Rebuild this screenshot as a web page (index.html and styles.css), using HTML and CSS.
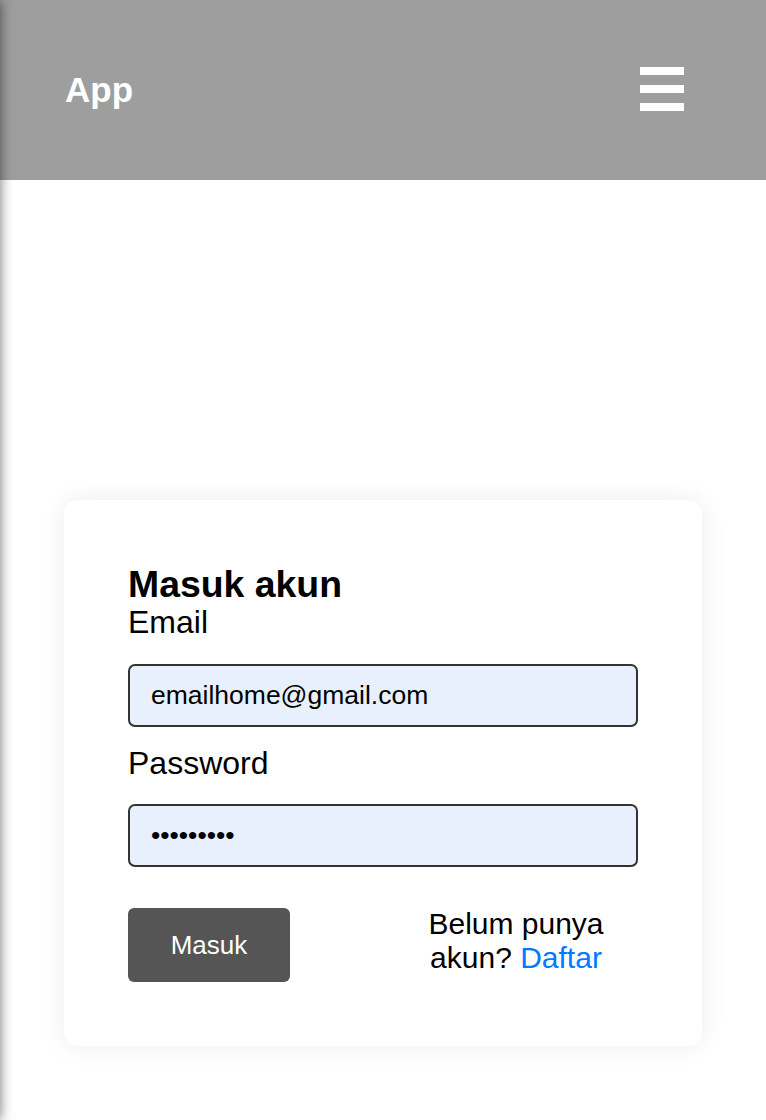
FILE: index.html
```html
<!DOCTYPE html>
<html lang="id">
<head>
<meta charset="utf-8">
<title>App</title>
<link rel="stylesheet" href="styles.css">
</head>
<body>
<div class="drawer" aria-hidden="true"></div>
<header class="topbar">
  <div class="brand">App</div>
  <button class="menu" type="button" aria-label="Menu">
    <span></span><span></span><span></span>
  </button>
</header>
<main class="page">
  <form class="card">
    <h3 class="title">Masuk akun</h3>
    <label class="label" for="email">Email</label>
    <input class="field" id="email" type="email" value="emailhome@gmail.com">
    <label class="label label-gap" for="pw">Password</label>
    <input class="field" id="pw" type="password" value="password1">
    <div class="actions">
      <button class="submit" type="button">Masuk</button>
      <p class="signup">Belum punya akun? <a href="#" class="link">Daftar</a></p>
    </div>
  </form>
</main>
</body>
</html>
```
FILE: styles.css
```css
* { box-sizing: border-box; }
html, body { margin: 0; padding: 0; }
body {
  font-family: "Liberation Sans", Arial, sans-serif;
  background: #ffffff;
  color: #000;
  width: 766px;
  min-height: 1120px;
  overflow: hidden;
}
.drawer {
  position: fixed;
  top: 0;
  left: -300px;
  width: 300px;
  height: 100%;
  background: #9e9e9e;
  box-shadow: 0 0 12px rgba(0, 0, 0, 0.55);
  z-index: 5;
}
.topbar {
  height: 180px;
  background: #9e9e9e;
  display: flex;
  align-items: center;
  justify-content: space-between;
  padding: 0 82px 0 65px;
}
.brand {
  color: #fff;
  font-weight: bold;
  font-size: 35px;
  line-height: 40px;
}
.menu {
  background: none;
  border: 0;
  padding: 0;
  width: 44px;
  display: flex;
  flex-direction: column;
  gap: 10px;
  margin-top: -3px;
  cursor: pointer;
}
.menu span {
  display: block;
  width: 44px;
  height: 8px;
  background: #fff;
}
.page {
  padding: 320px 64px 0;
}
.card {
  background: #fff;
  border-radius: 14px;
  box-shadow: 0 0 26px rgba(0, 0, 0, 0.08);
  padding: 64px;
  display: flex;
  flex-direction: column;
}
.title {
  margin: 0;
  font-size: 37.4px;
  line-height: 40px;
  font-weight: bold;
}
.label {
  font-size: 32px;
  line-height: 36px;
  margin-bottom: 24px;
}
.label-gap { margin-top: 18px; margin-bottom: 23px; }
.field {
  height: 63px;
  width: 100%;
  border: 2px solid #333;
  border-radius: 7px;
  background: #e8f0fe;
  padding: 0 21px;
  font-family: "Liberation Sans", Arial, sans-serif;
  font-size: 26.5px;
  color: #000;
  outline: none;
}
.actions {
  margin-top: 41px;
  display: flex;
  align-items: flex-start;
  justify-content: space-between;
}
.submit {
  width: 162px;
  height: 74px;
  border: 0;
  border-radius: 6px;
  background: #555;
  color: #fff;
  font-family: "Liberation Sans", Arial, sans-serif;
  font-size: 26px;
  cursor: pointer;
}
.signup {
  margin: -1px 0 0;
  width: 244px;
  text-align: center;
  font-size: 30px;
  line-height: 34px;
}
.link {
  color: #007bff;
  text-decoration: none;
}
```
